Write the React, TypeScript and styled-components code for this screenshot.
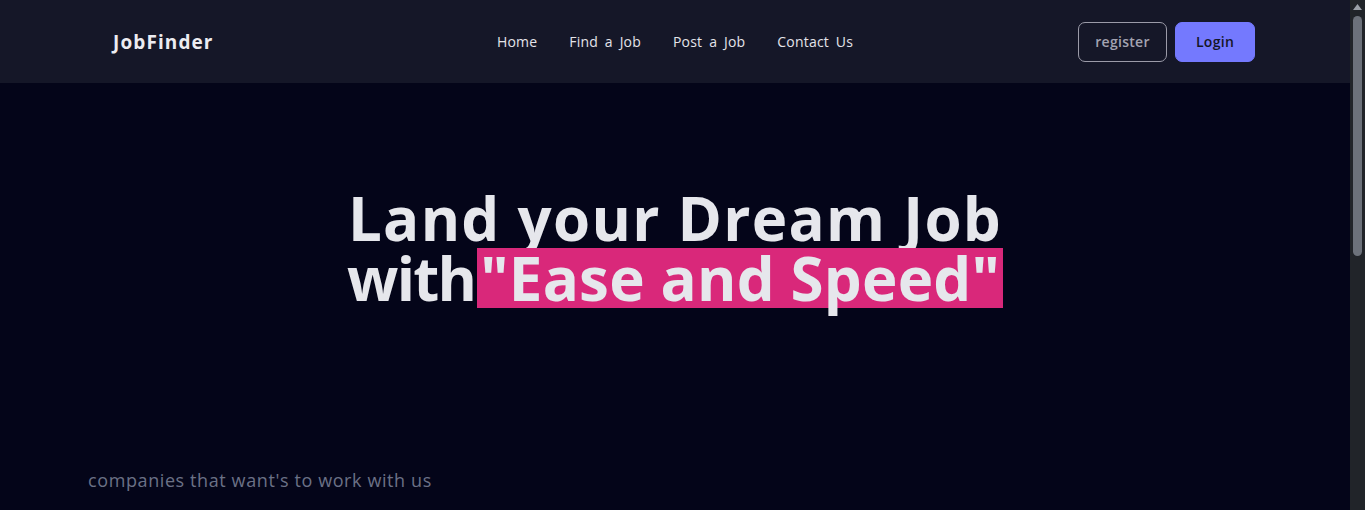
import React from "react";
import styled, { createGlobalStyle } from "styled-components";

const Global = createGlobalStyle`
  html { color-scheme: dark; }
  body {
    margin: 0;
    background: #040519;
    font-family: "Open Sans", "DejaVu Sans", sans-serif;
    overflow: hidden;
  }
  * { box-sizing: border-box; }
`;

const Viewport = styled.div`
  height: 100vh;
  display: grid;
  grid-template-columns: 1fr 15px;
  background: #040519;
  overflow: hidden;
`;

const Page = styled.div`
  min-width: 0;
  min-height: 1020px;
`;

const ScrollRail = styled.div`
  background: #212429;
  display: flex;
  flex-direction: column;
  align-items: center;
  padding-top: 4px;
`;

const ScrollThumb = styled.div`
  margin-top: 6px;
  width: 9px;
  height: 240px;
  border-radius: 5px;
  background: #6c717a;
`;

const Header = styled.header`
  height: 83px;
  background: #151728;
  display: grid;
  grid-template-columns: 1fr auto 1fr;
  align-items: center;
  padding: 0 95px;
`;

const Logo = styled.div`
  padding-left: 18px;
  color: #ececf1;
  font-size: 19px;
  font-weight: 700;
  letter-spacing: 1.1px;
`;

const Nav = styled.nav`
  display: flex;
  gap: 32px;
`;

const NavLink = styled.a`
  color: #e4e4ea;
  font-size: 14px;
  font-weight: 500;
  letter-spacing: 0.2px;
  word-spacing: 3px;
  text-decoration: none;
  cursor: pointer;
`;

const Actions = styled.div`
  display: flex;
  justify-content: flex-end;
  gap: 8px;
`;

const Button = styled.button<{ $primary?: boolean; $w: number }>`
  height: 40px;
  width: ${(p) => p.$w}px;
  border-radius: 7px;
  font-family: inherit;
  font-size: 14px;
  font-weight: 600;
  letter-spacing: 0.3px;
  cursor: pointer;
  border: 1px solid ${(p) => (p.$primary ? "#7479fe" : "#9b9ba8")};
  background: ${(p) => (p.$primary ? "#7479fe" : "transparent")};
  color: ${(p) => (p.$primary ? "#141627" : "#a3a3b1")};
`;

const Hero = styled.section`
  display: flex;
  flex-direction: column;
`;

const Heading = styled.h1`
  margin: 105px 0 0;
  text-align: center;
  color: #e6e7ec;
  font-size: 60px;
  line-height: 60px;
  font-weight: 700;
`;

const Line = styled.span<{ $spacing: number }>`
  letter-spacing: ${(p) => p.$spacing}px;
`;

const Highlight = styled.span`
  display: inline-block;
  background: #d9287a;
  padding: 0 3px;
  margin-left: 2px;
  line-height: 60px;
  letter-spacing: 0.2px;
`;

const Subtitle = styled.p`
  margin: 158px 0 0 88px;
  color: #6b7186;
  font-size: 18px;
  line-height: 28px;
  font-weight: 400;
  letter-spacing: 0.6px;
`;

export default function App() {
  return (
    <Viewport>
      <Global />
      <Page>
        <Header>
          <Logo>JobFinder</Logo>
          <Nav>
            <NavLink>Home</NavLink>
            <NavLink>Find a Job</NavLink>
            <NavLink>Post a Job</NavLink>
            <NavLink>Contact Us</NavLink>
          </Nav>
          <Actions>
            <Button $w={89}>register</Button>
            <Button $primary $w={80}>Login</Button>
          </Actions>
        </Header>
        <Hero>
          <Heading>
            <Line $spacing={1.3}>Land your Dream Job</Line>
            <br />
            <Line $spacing={-1.7}>with</Line>
            <Highlight>"Ease and Speed"</Highlight>
          </Heading>
          <Subtitle>companies that want's to work with us</Subtitle>
        </Hero>
      </Page>
      <ScrollRail aria-hidden>
        <svg width="9" height="6" viewBox="0 0 9 6">
          <path d="M4.5 0 L9 6 L0 6 Z" fill="#9ba0a8" />
        </svg>
        <ScrollThumb />
      </ScrollRail>
    </Viewport>
  );
}
